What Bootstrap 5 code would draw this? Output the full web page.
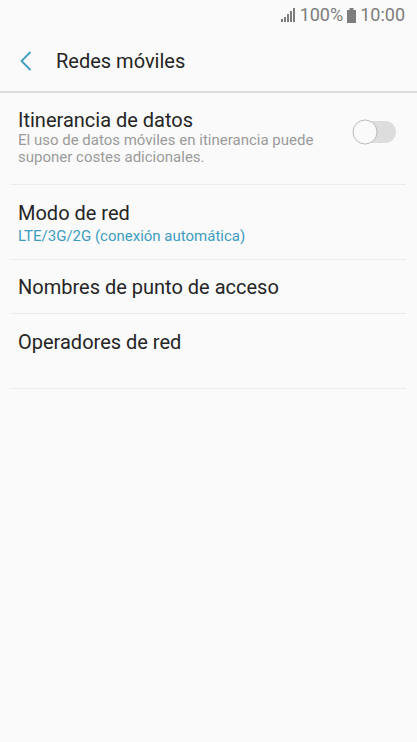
<!DOCTYPE html>
<html lang="es">
<head>
<meta charset="utf-8">
<meta name="viewport" content="width=device-width, initial-scale=1">
<title>Redes móviles</title>
<link href="https://cdn.jsdelivr.net/npm/bootstrap@5.3.0/dist/css/bootstrap.min.css" rel="stylesheet">
<style>
body{background:#fafafa;color:#252525;font-family:Roboto,"Noto Sans",sans-serif;font-size:20px;line-height:24px;height:742px;overflow:hidden}
.status{height:30px;color:#7d7d7d;font-size:18px;line-height:30px;padding-right:12px}
.topbar{height:63px;border-bottom:2px solid #dcdcdc;padding-left:20px}
.settings{margin:0 11px}
.setting{border-bottom:1px solid #ebebeb;padding:0 7px;white-space:nowrap}
.roaming{height:92px;padding-top:15px}
.mode{height:75px;padding-top:16px}
.apn{height:54px;padding-top:15px}
.operators{height:75px;padding-top:16px}
.hint{font-size:15px;line-height:17px;color:#9a9a9a}
.value{font-size:15px;line-height:23px;color:#3c9dc0}
.page-title{font-size:20px}
.toggle{margin:9px 2px 0 0}
</style>
</head>
<body>
<div class="status d-flex justify-content-end align-items-center">
<svg width="15" height="14" viewBox="0 0 15 14" fill="#7d7d7d"><path d="M0 11h2v3H0zM3 9h2v5H3zM6 6h2v8H6zM9 3h2v11H9zM12 0h2v14h-2z"/></svg>
<span class="ms-1">100%</span>
<svg class="mx-1" width="9" height="15" viewBox="0 0 9 15" fill="#7d7d7d"><path d="M2.5 0h4v2H9v13H0V2h2.500z"/></svg>
<span>10:00</span>
</div>
<header class="topbar d-flex align-items-center">
<svg width="12" height="20" viewBox="0 0 12 20" fill="none" stroke="#3c9dc0" stroke-width="1.800"><path d="M10.500 1L1.500 10l9 9"/></svg>
<span class="page-title ms-4">Redes móviles</span>
</header>
<main class="settings">
<div class="setting roaming d-flex justify-content-between"><div><div>Itinerancia de datos</div><div class="hint">El uso de datos móviles en itinerancia puede<br>suponer costes adicionales.</div></div>
<svg class="toggle" width="46" height="30" viewBox="0 0 46 30"><rect x="5" y="4" width="40" height="22" rx="11" fill="#ddd"/><circle cx="14" cy="15" r="12" fill="#fafafa" stroke="#bbb"/></svg></div>
<div class="setting mode"><div>Modo de red</div><div class="value">LTE/3G/2G (conexión automática)</div></div>
<div class="setting apn">Nombres de punto de acceso</div>
<div class="setting operators">Operadores de red</div>
</main>
<script src="https://cdn.jsdelivr.net/npm/bootstrap@5.3.0/dist/js/bootstrap.bundle.min.js"></script>
</body>
</html>
